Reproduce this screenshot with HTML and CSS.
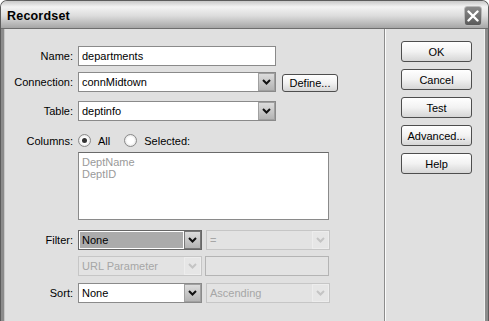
FILE: index.html
```html
<!DOCTYPE html>
<html lang="en">
<head>
  <meta charset="UTF-8">
  <title>Recordset</title>
  <link rel="stylesheet" href="styles.css">
</head>
<body>

<div class="window">
  <div class="titlebar">
    <span class="title">Recordset</span>
    <span class="close">
      <svg width="12" height="12" viewBox="0 0 12 12"><path d="M1.5 1.5 L10.5 10.5 M10.5 1.5 L1.5 10.5" stroke="#fff" stroke-width="2.4" stroke-linecap="round"/></svg>
    </span>
  </div>

  <div class="frame">
    <div class="form">
      <div class="row row-name">
        <span class="label">Name:</span>
        <div class="box w-long">departments</div>
      </div>

      <div class="row row-conn">
        <span class="label">Connection:</span>
        <div class="select w-long"><span class="val">connMidtown</span><span class="arrow"><svg width="9" height="6" viewBox="0 0 9 6"><path d="M1 1 L4.5 4.5 L8 1" fill="none" stroke="#111" stroke-width="2"/></svg></span></div>
        <button class="btn btn-define">Define...</button>
      </div>

      <div class="row row-table">
        <span class="label">Table:</span>
        <div class="select w-long"><span class="val">deptinfo</span><span class="arrow"><svg width="9" height="6" viewBox="0 0 9 6"><path d="M1 1 L4.5 4.5 L8 1" fill="none" stroke="#111" stroke-width="2"/></svg></span></div>
      </div>

      <div class="row row-cols">
        <span class="label">Columns:</span>
        <span class="radio checked"></span><span class="opt">All</span>
        <span class="radio"></span><span class="opt">Selected:</span>
      </div>

      <div class="row row-list">
        <span class="label"></span>
        <div class="list">
          <div>DeptName</div>
          <div>DeptID</div>
        </div>
      </div>

      <div class="row row-filter">
        <span class="label">Filter:</span>
        <div class="select w-half focus"><span class="val">None</span><span class="arrow"><svg width="9" height="6" viewBox="0 0 9 6"><path d="M1 1 L4.5 4.5 L8 1" fill="none" stroke="#111" stroke-width="2"/></svg></span></div>
        <div class="select w-half off"><span class="val">=</span><span class="arrow"><svg width="9" height="6" viewBox="0 0 9 6"><path d="M1 1 L4.5 4.5 L8 1" fill="none" stroke="#c4c4c4" stroke-width="2"/></svg></span></div>
      </div>

      <div class="row row-url">
        <span class="label"></span>
        <div class="select w-half off"><span class="val">URL Parameter</span><span class="arrow"><svg width="9" height="6" viewBox="0 0 9 6"><path d="M1 1 L4.5 4.5 L8 1" fill="none" stroke="#c4c4c4" stroke-width="2"/></svg></span></div>
        <div class="box w-half off"></div>
      </div>

      <div class="row row-sort">
        <span class="label">Sort:</span>
        <div class="select w-half"><span class="val">None</span><span class="arrow"><svg width="9" height="6" viewBox="0 0 9 6"><path d="M1 1 L4.5 4.5 L8 1" fill="none" stroke="#111" stroke-width="2"/></svg></span></div>
        <div class="select w-half off"><span class="val">Ascending</span><span class="arrow"><svg width="9" height="6" viewBox="0 0 9 6"><path d="M1 1 L4.5 4.5 L8 1" fill="none" stroke="#c4c4c4" stroke-width="2"/></svg></span></div>
      </div>
    </div>

    <div class="sep"></div>

    <div class="actions">
      <button class="btn">OK</button>
      <button class="btn">Cancel</button>
      <button class="btn">Test</button>
      <button class="btn">Advanced...</button>
      <button class="btn">Help</button>
    </div>
  </div>
</div>

</body>
</html>
```

FILE: styles.css
```css
body {
  margin: 0;
  background: #fff;
  font-family: "Liberation Sans", Arial, sans-serif;
  font-size: 11px;
  color: #000;
}
.window {
  width: 489px;
  height: 330px;
  box-sizing: border-box;
  border: 1px solid #5c5c5c;
  border-bottom: none;
  border-radius: 7px 7px 0 0;
  background: #e0e0e0;
  overflow: hidden;
}
.titlebar {
  height: 27px;
  display: flex;
  align-items: center;
  justify-content: space-between;
  padding: 0 6px 0 6px;
  background: linear-gradient(#c8c8c8 0%, #f3f3f3 22%, #dcdcdc 55%, #a6a6a6 100%);
  border-bottom: 1px solid #6e6e6e;
}
.title {
  font-size: 12.5px;
  font-weight: bold;
  letter-spacing: 0.2px;
  padding-top: 2px;
}
.close {
  width: 18px;
  height: 20px;
  box-sizing: border-box;
  margin-top: 2px;
  display: flex;
  align-items: center;
  justify-content: center;
  border: 1px solid #b8b8b8;
  border-radius: 3px;
  background: linear-gradient(#8a8a8a, #5a5a5a);
}
.frame {
  display: flex;
  height: 300px;
  border-left: 3px solid #8c8c8c;
  border-right: 3px solid #8c8c8c;
  box-shadow: inset 1px 0 0 #c8c8c8, inset -1px 0 0 #f0f0f0;
}
.form {
  width: 380px;
  padding-top: 17px;
}
.row {
  display: flex;
  align-items: center;
}
.label {
  width: 69px;
  padding-right: 5px;
  text-align: right;
  flex-shrink: 0;
}
.row-conn { margin-top: 6px; }
.row-table { margin-top: 9px; }
.row-cols { margin-top: 12px; height: 15px; }
.row-list { margin-top: 4px; align-items: flex-start; }
.row-filter { margin-top: 10px; }
.row-url { margin-top: 6px; }
.row-sort { margin-top: 7px; }

.box, .select {
  height: 20px;
  box-sizing: border-box;
  border: 1px solid #8a8a8a;
  background: #fff;
}
.box {
  padding: 0 3px;
  line-height: 18px;
}
.w-long { width: 198px; }
.w-half { width: 124px; margin-right: 4px; }
.select {
  display: flex;
}
.select .val {
  flex: 1;
  padding-left: 3px;
  line-height: 18px;
  white-space: nowrap;
  overflow: hidden;
}
.select .arrow {
  width: 17px;
  box-sizing: border-box;
  display: flex;
  align-items: center;
  justify-content: center;
  border: 1px solid #a0a0a0;
  background: linear-gradient(#dcdcdc, #b4b4b4);
}
.select.focus {
  border-color: #666;
}
.select.focus .val {
  background: #ababab;
  margin: 1px;
  line-height: 16px;
  padding-left: 2px;
}
.select.focus .arrow {
  border-color: #777;
}
.off {
  background: #e3e3e3;
  border-color: #c6c6c6;
  color: #a6a6a6;
}
.select.off .arrow {
  background: #e6e6e6;
  border-color: #ededed;
}
.box.off {
  width: 124px;
  margin-left: -1px;
  border-color: #b4b4b4;
}

.btn {
  font-family: "Liberation Sans", Arial, sans-serif;
  font-size: 11px;
  color: #000;
  box-sizing: border-box;
  border: 1px solid #4e4e4e;
  border-radius: 3px;
  background: linear-gradient(#ffffff, #f2f2f2 50%, #d6d6d6);
  padding: 0;
}
.btn-define {
  width: 56px;
  height: 18px;
  margin-left: 6px;
  margin-top: 2px;
}

.radio {
  width: 13px;
  height: 13px;
  box-sizing: border-box;
  border: 1px solid #8a8a8a;
  border-radius: 50%;
  background: radial-gradient(#ffffff 40%, #d2d2d2);
  display: flex;
  align-items: center;
  justify-content: center;
}
.radio.checked::after {
  content: "";
  width: 5px;
  height: 5px;
  border-radius: 50%;
  background: #333;
}
.opt {
  margin-left: 7px;
  margin-right: 14px;
}

.list {
  width: 251px;
  height: 68px;
  box-sizing: border-box;
  border: 1px solid #8a8a8a;
  border-top-color: #6a6a6a;
  background: #fff;
  color: #9a9a9a;
  padding: 3px 3px;
  line-height: 12px;
}

.sep {
  width: 1px;
  background: #8c8c8c;
  border-right: 1px solid #fafafa;
}
.actions {
  display: flex;
  flex-direction: column;
  gap: 7px;
  padding: 12px 0 0 15px;
}
.actions .btn {
  width: 71px;
  height: 21px;
}
```
